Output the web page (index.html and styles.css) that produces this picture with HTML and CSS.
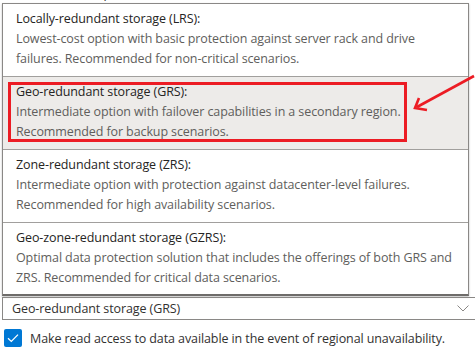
FILE: index.html
```html
<!DOCTYPE html>
<html>
<head>
<meta charset="utf-8">
<link rel="stylesheet" href="styles.css">
</head>
<body>
<div class="page">
  <div class="bg-line"><span>maximum protection</span><span>tier</span><span>Review + create</span></div>
  <div class="popup">
    <div class="option">
      <div class="title">Locally-redundant storage (LRS):</div>
      <div class="desc">Lowest-cost option with basic protection against server rack and drive<br>failures. Recommended for non-critical scenarios.</div>
    </div>
    <div class="option selected">
      <div class="title">Geo-redundant storage (GRS):</div>
      <div class="desc">Intermediate option with failover capabilities in a secondary region.<br>Recommended for backup scenarios.</div>
    </div>
    <div class="option">
      <div class="title">Zone-redundant storage (ZRS):</div>
      <div class="desc">Intermediate option with protection against datacenter-level failures.<br>Recommended for high availability scenarios.</div>
    </div>
    <div class="option">
      <div class="title">Geo-zone-redundant storage (GZRS):</div>
      <div class="desc">Optimal data protection solution that includes the offerings of both GRS and<br>ZRS. Recommended for critical data scenarios.</div>
    </div>
  </div>
  <div class="select">
    <span>Geo-redundant storage (GRS)</span>
    <svg class="chevron" width="12" height="7" viewBox="0 0 12 7"><path d="M0.5 0.5 L6 6 L11.5 0.5" fill="none" stroke="#8a8886" stroke-width="1"/></svg>
  </div>
  <div class="check-row">
    <span class="checkbox"><svg width="12" height="10" viewBox="0 0 12 10"><path d="M1 5.2 L4.3 8.4 L11 1.6" fill="none" stroke="#fff" stroke-width="1.3"/></svg></span>
    <span class="label">Make read access to data available in the event of regional unavailability.</span>
  </div>
  <svg class="annotation" width="475" height="354" viewBox="0 0 475 354">
    <rect x="9.5" y="83.5" width="396" height="57" fill="none" stroke="#ec1c24" stroke-width="3"/>
    <path d="M474 76 L417 107" fill="none" stroke="#ec1c24" stroke-width="2.6"/>
    <path d="M419 98 L415 108 L427 110" fill="none" stroke="#ec1c24" stroke-width="2.6"/>
  </svg>
</div>
</body>
</html>
```
FILE: styles.css
```css
html, body {
  margin: 0;
  padding: 0;
  background: #ffffff;
}

.page {
  position: relative;
  width: 475px;
  height: 354px;
  overflow: hidden;
  font-family: "Open Sans", "Noto Sans", sans-serif;
  font-size: 12.5px;
  letter-spacing: -0.1px;
  color: #323130;
}

.bg-line {
  height: 3px;
  overflow: hidden;
  display: flex;
  gap: 50px;
  padding-left: 42px;
  line-height: 20px;
  color: #323130;
}

.bg-line span {
  margin-top: -16px;
}

.popup {
  margin-left: 2px;
  width: 465px;
  border: 1px solid #8a8886;
  border-bottom: 2px solid #6e6c6a;
  background: #ffffff;
  box-shadow: 0 1px 2px rgba(0, 0, 0, 0.25);
}

.option {
  padding: 5px 13px 7px 13px;
  line-height: 20px;
  border-bottom: 1px solid #a19f9d;
  white-space: nowrap;
}

.option.compact {
  padding-bottom: 6px;
}

.option:last-child {
  border-bottom: none;
  padding-bottom: 6px;
}

.option.selected {
  background: #edebe9;
}

.title {
  color: #252423;
}

.desc {
  color: #605e5c;
}

.select {
  margin: 1px 0 0 2px;
  width: 457px;
  height: 21px;
  border: 1px solid #8a8886;
  padding: 0 10px 0 9px;
  display: flex;
  align-items: center;
  justify-content: space-between;
  color: #323130;
}

.chevron {
  display: block;
}

.check-row {
  margin-top: 9px;
  padding-left: 4px;
  display: flex;
  align-items: center;
  gap: 8px;
}

.checkbox {
  width: 18px;
  height: 18px;
  border-radius: 2px;
  background: #0078d4;
  display: flex;
  align-items: center;
  justify-content: center;
}

.label {
  color: #323130;
}

.annotation {
  position: absolute;
  left: 0;
  top: 0;
  pointer-events: none;
}
```
